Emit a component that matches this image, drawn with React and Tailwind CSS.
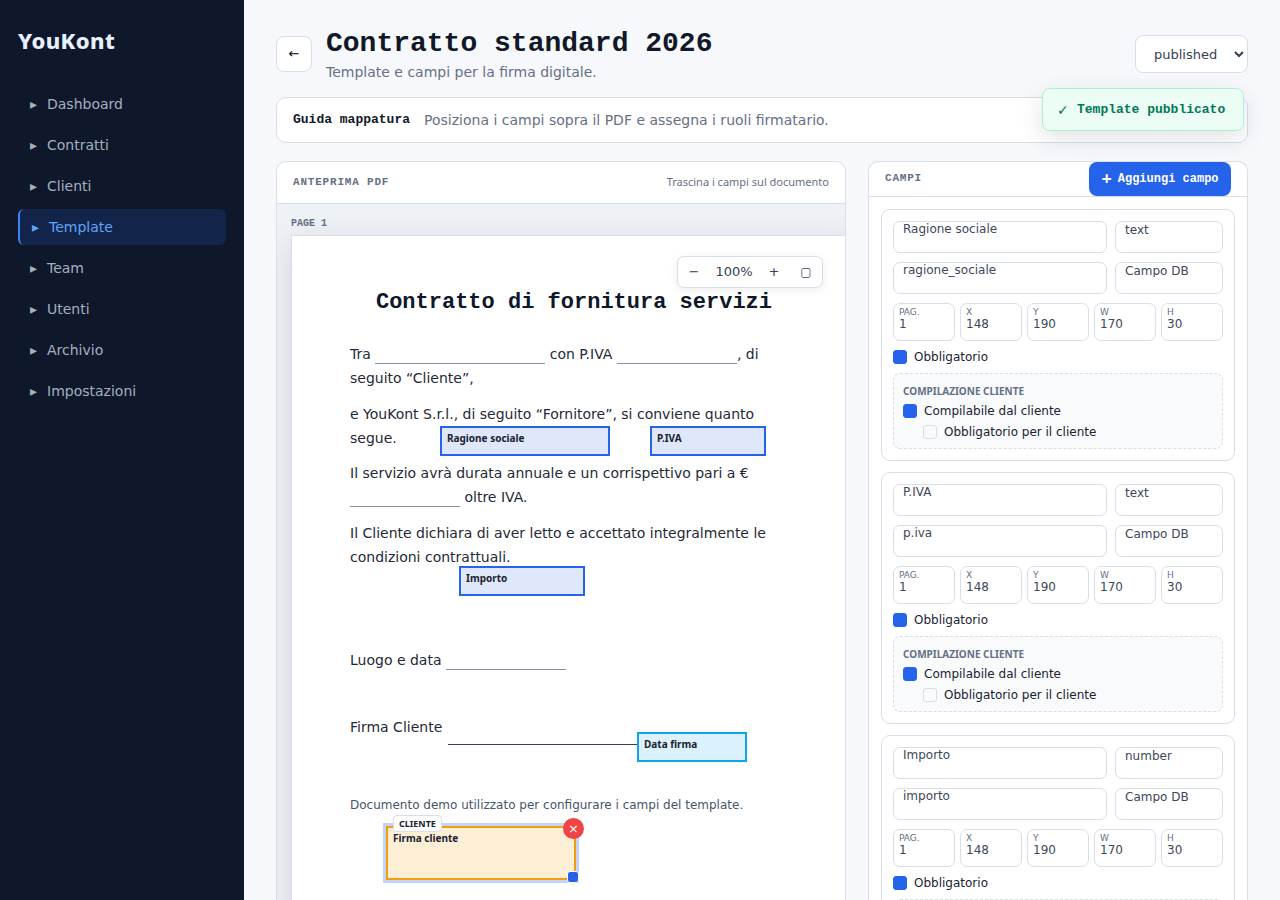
import React, { useState } from "react";

const navItems = ["Dashboard", "Contratti", "Clienti", "Template", "Team", "Utenti", "Archivio", "Impostazioni"];

const fields = [
  { name: "Ragione sociale", key: "ragione_sociale", type: "text" },
  { name: "P.IVA", key: "p.iva", type: "text" },
  { name: "Importo", key: "importo", type: "number" },
];

const metrics = [
  ["PAG.", "1"],
  ["X", "148"],
  ["Y", "190"],
  ["W", "170"],
  ["H", "30"],
];

function Sidebar() {
  return (
    <aside className="w-61 shrink-0 bg-[#0f172a] px-4.5 pt-6">
      <div className="font-['Noto_Sans',sans-serif] text-[22px] leading-8 font-extrabold tracking-[0.4px] text-[#e8f0ff]">YouKont</div>
      <nav className="mt-7.5 flex flex-col gap-[5px]">
        {navItems.map((item) => (
          <a
            key={item}
            href={"#" + item.toLowerCase()}
            aria-current={item === "Template" ? "page" : undefined}
            className={
              item === "Template"
                ? "flex h-9 items-center gap-2 rounded-md border-l-2 border-[#3b82f6] bg-[#12244a] px-3 text-sm text-[#60a5fa]"
                : "flex h-9 items-center gap-2 rounded-md px-3 text-sm text-[#a4afc0]"
            }
          >
            <span aria-hidden="true" className="w-[9px] text-sm">▸</span>
            {item}
          </a>
        ))}
      </nav>
    </aside>
  );
}

function Blank({ className }) {
  return <span className={"inline-block h-4 border-b border-[#8490a5] align-[-5px] " + className} />;
}

function Check({ label, on, className = "" }) {
  return (
    <label className={"flex h-3.5 items-center gap-[7px] text-xs text-[#1a2230] " + className}>
      <input
        type="checkbox"
        defaultChecked={on}
        className="size-3.5 appearance-none rounded-[3px] border border-[#d8dde8] bg-transparent checked:border-[#2563eb] checked:bg-[#2563eb]"
      />
      {label}
    </label>
  );
}

const boxClass =
  "block h-8 w-full min-w-0 appearance-none rounded-[7px] border border-[#d9dee9] bg-white px-[9px] pt-0 pb-4 text-xs text-[#3d4759]";

function FieldCard({ field }) {
  return (
    <article className="flex flex-col gap-[9px] rounded-[9px] border border-[#d9dee9] bg-white p-[11px]">
      <div className="grid grid-cols-[minmax(0,1fr)_108px] gap-x-2 gap-y-[9px]">
        <input aria-label="Nome campo" defaultValue={field.name} className={boxClass} />
        <select aria-label="Tipo" defaultValue={field.type} className={boxClass}>
          <option>{field.type}</option>
        </select>
        <input aria-label="Chiave" defaultValue={field.key} className={boxClass} />
        <select aria-label="Origine" defaultValue="Campo DB" className={boxClass}>
          <option>Campo DB</option>
        </select>
      </div>
      <div className="grid grid-cols-5 gap-[5px]">
        {metrics.map(([label, value]) => (
          <label key={label} className="flex h-[38px] flex-col rounded-[7px] border border-[#d9dee9] px-[5px] pt-[3px] text-[9px] leading-[10px] text-[#667085]">
            {label}
            <input defaultValue={value} className="h-3.5 w-full text-xs leading-3.5 text-[#3d4759]" />
          </label>
        ))}
      </div>
      <Check label="Obbligatorio" on />
      <section className="flex flex-col gap-[7px] rounded-[7px] border border-dashed border-[#d9dee9] bg-[#f8fafc] p-[9px]">
        <h3 className="h-3.5 font-['Noto_Sans',sans-serif] text-[10px] leading-4 font-bold text-[#667085]">COMPILAZIONE CLIENTE</h3>
        <Check label="Compilabile dal cliente" on />
        <Check label="Obbligatorio per il cliente" className="ml-5" />
      </section>
    </article>
  );
}

const tagClass =
  "absolute h-[30px] border-2 px-[5px] py-[3px] font-['Noto_Sans',sans-serif] text-[10px] leading-[14px] font-bold text-[#1a2230]";

function PdfPage() {
  return (
    <div className="relative h-[800px] w-[566px] border border-[#d9dee9] bg-white px-[58px] pt-[55px] text-sm leading-6 text-[#1f2937] shadow-[0_8px_30px_rgba(15,23,42,0.12)]">
      <h2 className="mb-[27px] text-center font-['Liberation_Mono',monospace] text-[22px] leading-6 font-bold text-[#0f172a]">
        Contratto di fornitura servizi
      </h2>
      <p className="mb-3">
        Tra <Blank className="w-[170px]" /> con P.IVA <Blank className="w-[120px]" />, di seguito “Cliente”,
      </p>
      <p className="mb-[11px]">e YouKont S.r.l., di seguito “Fornitore”, si conviene quanto segue.</p>
      <p className="mb-3">
        Il servizio avrà durata annuale e un corrispettivo pari a € <Blank className="w-[110px]" /> oltre IVA.
      </p>
      <p>Il Cliente dichiara di aver letto e accettato integralmente le condizioni contrattuali.</p>
      <p className="mt-[79px]">
        Luogo e data <Blank className="w-[120px]" />
      </p>
      <div className="mt-[43px] flex h-[30px] gap-1.5">
        Firma Cliente
        <span className="w-[190px] border-b border-[#334155]" />
      </div>
      <p className="mt-12 text-xs leading-6 text-[#475569]">Documento demo utilizzato per configurare i campi del template.</p>

      <div className={tagClass + " top-[190px] left-[148px] w-[170px] border-[#2563eb] bg-[#dfe7fb]"}>Ragione sociale</div>
      <div className={tagClass + " top-[190px] left-[358px] w-[116px] border-[#2563eb] bg-[#dfe7fb]"}>P.IVA</div>
      <div className={tagClass + " top-[330px] left-[167px] w-[126px] border-[#2563eb] bg-[#dfe7fb]"}>Importo</div>
      <div className={tagClass + " top-[496px] left-[345px] w-[110px] border-[#0ea5e9] bg-[#dbf1fc]"}>Data firma</div>
      <div className="absolute top-[590px] left-[94px] h-[54px] w-[190px] border-2 border-[#f59e0b] bg-[#fdeed6] px-[5px] py-[3px] font-['Noto_Sans',sans-serif] text-[10px] leading-[14px] font-bold text-[#1a2230] ring-3 ring-[#2563eb]/28">
        Firma cliente
        <span className="absolute -top-[13px] left-[5px] h-[17px] rounded-sm border border-[#d9dee9] bg-white px-[5px] text-[9px] leading-4">CLIENTE</span>
        <button aria-label="Rimuovi campo" className="absolute -top-[10px] -right-[10px] flex size-[21px] items-center justify-center rounded-full bg-[#ef4444] font-['DejaVu_Sans',sans-serif] text-[13px] font-normal text-white">×</button>
        <span className="absolute -right-[5px] -bottom-[5px] size-3 rounded-[3px] border border-white bg-[#2563eb]" />
      </div>
    </div>
  );
}

export default function App() {
  const [status, setStatus] = useState("published");
  return (
    <div className="flex h-screen overflow-hidden bg-[#f6f8fc] font-['DejaVu_Sans',sans-serif] text-[#111827]">
      <Sidebar />
      <main className="relative flex min-w-0 flex-1 flex-col px-8 pt-6.5">
        <header className="flex h-14 items-center gap-3.5">
          <button aria-label="Indietro" className="flex size-9 items-center justify-center rounded-lg border border-[#d9dee9] bg-white text-[13px] text-black">←</button>
          <div className="min-w-0 flex-1">
            <h1 className="font-['Liberation_Mono',monospace] text-[28px] leading-9 font-bold">Contratto standard 2026</h1>
            <p className="text-sm leading-5 text-[#667085]">Template e campi per la firma digitale.</p>
          </div>
          <select
            aria-label="Stato"
            value={status}
            onChange={(e) => setStatus(e.target.value)}
            className="h-[38px] w-[113px] rounded-lg border border-[#d9dee9] bg-white pl-3.5 text-[13px] text-[#344054]"
          >
            <option>published</option>
            <option>draft</option>
          </select>
        </header>

        <section className="mt-[15px] flex h-[46px] shrink-0 items-center gap-3.5 rounded-[10px] border border-[#d9dee9] bg-white px-4">
          <strong className="font-['Liberation_Mono',monospace] text-[13px]">Guida mappatura</strong>
          <span className="text-sm text-[#667085]">Posiziona i campi sopra il PDF e assegna i ruoli firmatario.</span>
        </section>

        <div role="status" className="absolute top-[88px] right-9 flex h-[43px] w-[202px] items-center gap-2 rounded-lg border border-[#a7f3d0] bg-[#ecfdf5] px-3.5 font-['Liberation_Mono',monospace] text-[13px] font-bold whitespace-nowrap text-[#047857] shadow-[0_8px_24px_rgba(15,23,42,0.12)]">
          <span aria-hidden="true" className="w-3 font-['DejaVu_Sans',sans-serif] text-sm">✓</span>
          Template pubblicato
        </div>

        <div className="mt-[18px] grid min-h-0 flex-1 grid-cols-[minmax(0,1fr)_380px] gap-[22px]">
          <section className="relative flex min-h-0 flex-col overflow-hidden rounded-t-[10px] border border-b-0 border-[#d9dee9] bg-[#eef1f6]">
            <div className="flex h-[42px] shrink-0 items-center justify-between border-b border-[#d9dee9] bg-white px-4 text-[#667085]">
              <h2 className="font-['Liberation_Mono',monospace] text-[11px] font-bold tracking-[0.8px]">ANTEPRIMA PDF</h2>
              <span className="font-['Noto_Sans',sans-serif] text-[11px]">Trascina i campi sul documento</span>
            </div>
            <div className="min-h-0 flex-1 overflow-hidden pt-3 pl-3.5">
              <div className="mb-[3px] h-4 font-['Liberation_Mono',monospace] text-[10px] leading-4 font-bold text-[#667085]">PAGE 1</div>
              <PdfPage />
            </div>
            <div className="absolute top-[94px] right-[22px] flex h-8 w-[146px] items-center rounded-[7px] border border-[#d9dee9] bg-white text-[13px] text-[#344054] shadow-[0_2px_8px_rgba(15,23,42,0.08)]">
              <button aria-label="Riduci" className="w-8">−</button>
              <span className="w-12 text-center">100%</span>
              <button aria-label="Ingrandisci" className="w-8">+</button>
              <button aria-label="Adatta" className="w-8 text-xs">▢</button>
            </div>
          </section>

          <section className="flex min-h-0 flex-col overflow-hidden rounded-t-[10px] border border-b-0 border-[#d9dee9] bg-white">
            <div className="flex h-[35px] shrink-0 items-start justify-between border-b border-[#d9dee9] px-4">
              <h2 className="font-['Liberation_Mono',monospace] text-[11px] leading-8 font-bold tracking-[0.8px] text-[#667085]">CAMPI</h2>
              <button className="flex h-[34px] w-[142px] items-center justify-center gap-1.5 rounded-lg bg-[#2563eb] font-['Liberation_Mono',monospace] text-xs font-bold whitespace-nowrap text-white">
                <span aria-hidden="true" className="pb-0.5 font-['Noto_Sans',sans-serif] text-lg leading-6">+</span>
                Aggiungi campo
              </button>
            </div>
            <div className="flex min-h-0 flex-1 flex-col gap-[11px] overflow-hidden p-3 *:shrink-0">
              {fields.map((f) => (
                <FieldCard key={f.key} field={f} />
              ))}
            </div>
          </section>
        </div>
      </main>
    </div>
  );
}
